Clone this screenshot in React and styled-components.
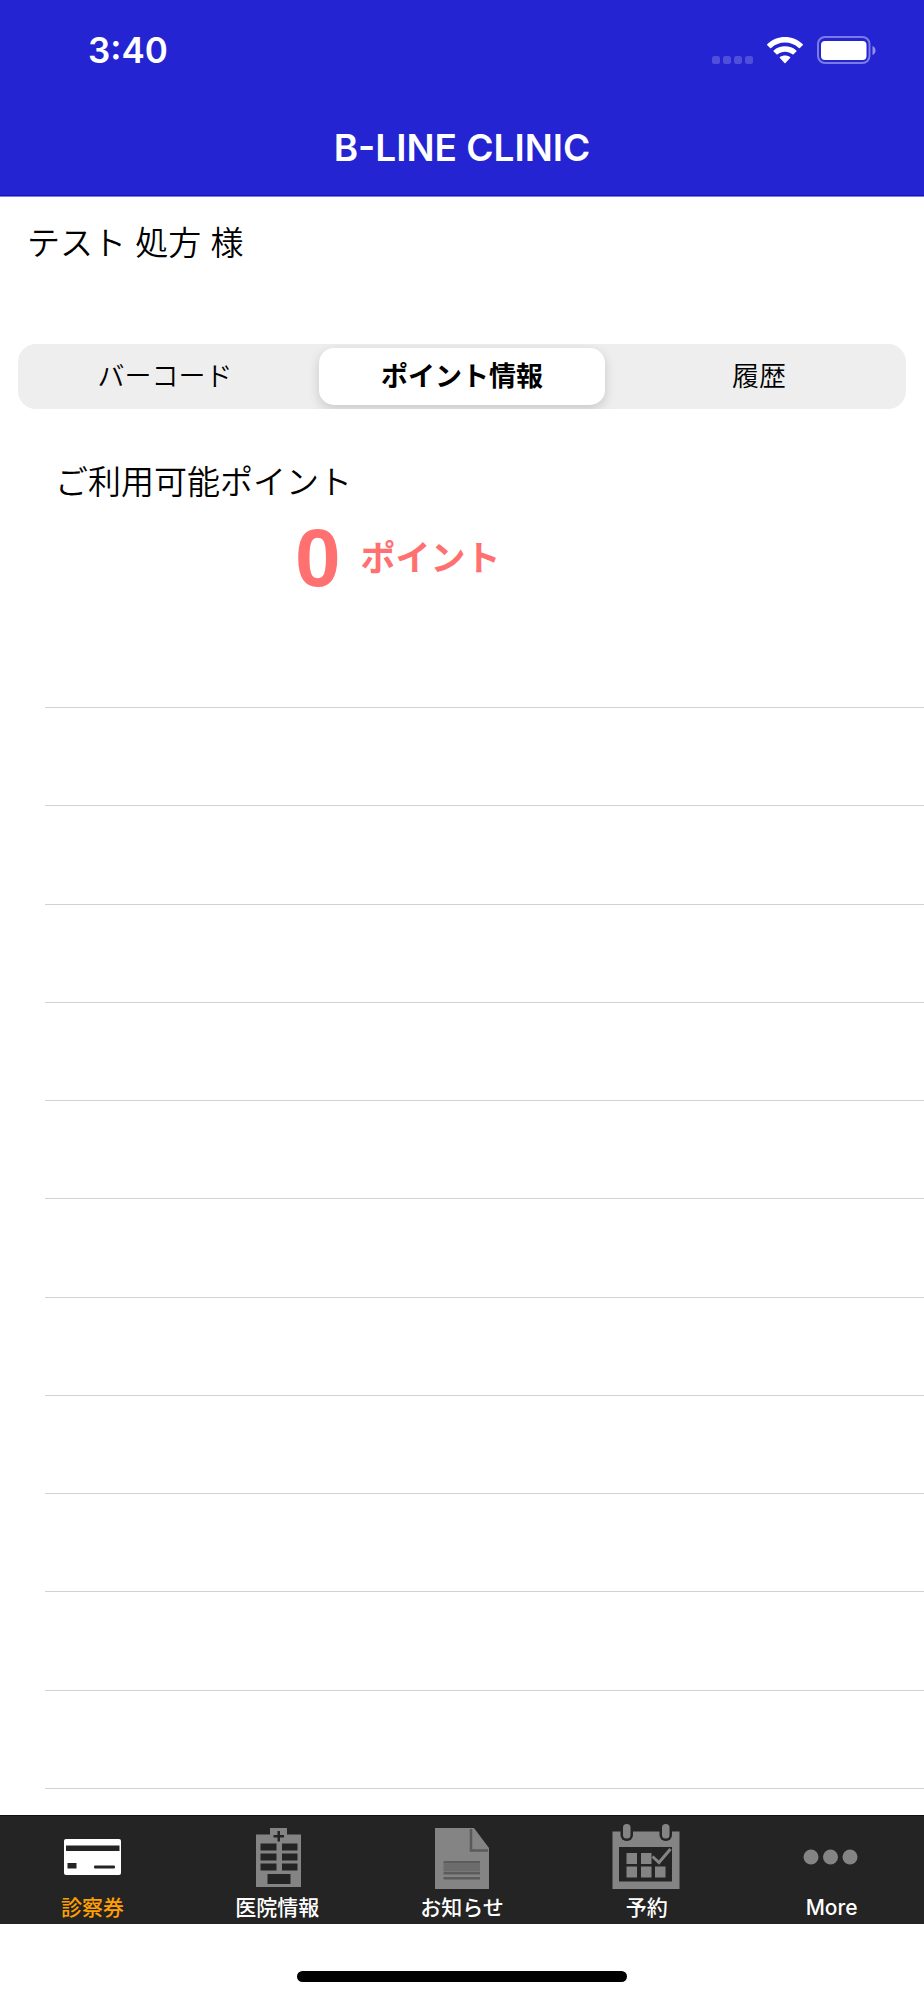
import React, { useState } from 'react'
import styled, { createGlobalStyle } from 'styled-components'

const SEGMENTS = ['バーコード', 'ポイント情報', '履歴']

const ROW_COUNT = 11

const SignalIcon = () => (
  <svg width="41" height="28" viewBox="0 0 41 28" fill="#fff" fillOpacity="0.2">
    <rect x="0" y="20" width="8" height="8" rx="2.5" />
    <rect x="11" y="20" width="8" height="8" rx="2.5" />
    <rect x="22" y="20" width="8" height="8" rx="2.5" />
    <rect x="33" y="20" width="8" height="8" rx="2.5" />
  </svg>
)

const WifiIcon = () => (
  <svg width="36" height="28" viewBox="0 0 36 28" fill="#fff">
    <path d="M0.3 9.2Q-0.2 8.6 0.4 8C5.200 3.500 11.400 1 18 1S30.800 3.500 35.600 8Q36.200 8.600 35.700 9.200L32.900 11.900Q32.400 12.400 31.800 11.900C28 8.500 23.200 6.600 18 6.600S8 8.500 4.200 11.900Q3.600 12.400 3.100 11.900Z" />
    <path d="M6.600 15.500Q6.100 15 6.700 14.400C9.800 11.700 13.800 10.300 18 10.300S26.200 11.700 29.300 14.400Q29.900 15 29.400 15.500L26.500 18.300Q26 18.800 25.400 18.300C23.300 16.600 20.800 15.700 18 15.700S12.700 16.600 10.600 18.300Q10 18.800 9.500 18.300Z" />
    <path d="M12.900 22.100Q12.300 21.500 13 21C14.400 20 16.100 19.500 18 19.500S21.600 20 23 21Q23.700 21.500 23.100 22.100L18.500 26.900Q18 27.400 17.500 26.900Z" />
  </svg>
)

const BatteryIcon = () => (
  <svg width="60" height="28" viewBox="0 0 60 28">
    <rect x="1" y="1" width="51.500" height="26" rx="7" fill="none" stroke="#fff" strokeOpacity="0.400" strokeWidth="2" />
    <rect x="4" y="5" width="45.500" height="19" rx="4" fill="#fff" />
    <path d="M55.500 10c4 1.500 4 7.500 0 9z" fill="#fff" fillOpacity="0.500" />
  </svg>
)

const CardIcon = () => (
  <svg width="70" height="70" viewBox="0 0 70 70">
    <rect x="7" y="17" width="57" height="36" rx="2" fill="#fff" />
    <path d="M9 23.500h53.500v5.500H9z" fill="#242424" />
    <rect x="10.500" y="41" width="9" height="5.500" fill="#242424" />
    <rect x="37" y="43.500" width="21" height="3" rx="1" fill="#242424" />
  </svg>
)

const HospitalIcon = () => (
  <svg width="70" height="70" viewBox="0 0 70 70">
    <path d="M14 12.500h14V6h17v6.500h14V65H14z" fill="#848484" />
    <g fill="#242424">
      <path d="M35.500 9h2.500v4h4v2.500h-4v4h-2.500v-4h-4V13h4z" />
      <path d="M18.500 21.500h16v7h-16zM40 21.500h15.500v7H40z" />
      <path d="M18.500 31.500h16v7h-16zM40 31.500h15.500v7H40z" />
      <path d="M18.500 41.500h16v7h-16zM40 41.500h15.500v7H40z" />
      <path d="M25.500 52h23v10h-23z" />
    </g>
  </svg>
)

const DocumentIcon = () => (
  <svg width="70" height="70" viewBox="0 0 70 70">
    <path d="M8 6h39l15 20v41H8z" fill="#848484" />
    <path d="M44 7v21.500h17" fill="none" stroke="#5a5a5a" strokeWidth="2.500" />
    <path d="M16.500 39h36.500v2.500H16.500zM16.500 50h36.500v2.500H16.500zM16.500 55h36.500v2.500H16.500z" fill="#5c5c5c" />
    <path d="M16.500 41.500h36.500v8H16.500z" fill="#6c6c6c" />
  </svg>
)

const CalendarIcon = () => (
  <svg width="70" height="70" viewBox="0 0 70 70">
    <path d="M0.500 9.500h67V67H0.500z" fill="#848484" />
    <path d="M7 25h53v34.500H7z" fill="#242424" />
    <rect x="8.500" y="-4" width="12.500" height="23" rx="6" fill="#242424" />
    <rect x="47.500" y="-4" width="12.500" height="23" rx="6" fill="#242424" />
    <rect x="11" y="2" width="7.500" height="14.500" rx="3.500" fill="#848484" />
    <rect x="50" y="2" width="7.500" height="14.500" rx="3.500" fill="#848484" />
    <g fill="#848484">
      <path d="M14.500 31h10.500v11H14.500zM29 31h10.500v11H29z" />
      <path d="M14.500 44.500h10.500v11H14.500zM29 44.500h10.500v11H29zM43 44.500h10.500v11H43z" />
    </g>
    <path d="M40.500 34.500l6.500 6L58.500 27" fill="none" stroke="#848484" strokeWidth="3" />
  </svg>
)

const MoreIcon = () => (
  <svg width="70" height="70" viewBox="0 0 70 70" fill="#848484">
    <circle cx="14" cy="35" r="7.500" />
    <circle cx="33.500" cy="35" r="7.500" />
    <circle cx="53" cy="35" r="7.500" />
  </svg>
)

const TABS = [
  { label: '診察券', Icon: CardIcon },
  { label: '医院情報', Icon: HospitalIcon },
  { label: 'お知らせ', Icon: DocumentIcon },
  { label: '予約', Icon: CalendarIcon },
  { label: 'More', Icon: MoreIcon },
]

const App = () => {
  const [segment, setSegment] = useState(1)
  const [tab, setTab] = useState(0)

  const onTabClick = (e, index) => {
    e.preventDefault()
    setTab(index)
  }

  return (
    <Page>
      <GlobalStyle />
      <Header>
        <StatusBar>
          <Time>3:40</Time>
          <StatusIcons>
            <SignalIcon />
            <WifiIcon />
            <BatteryIcon />
          </StatusIcons>
        </StatusBar>
        <Title>B-LINE CLINIC</Title>
      </Header>

      <Main>
        <PatientName>テスト 処方 様</PatientName>

        <SegmentedControl>
          {SEGMENTS.map((label, index) => (
            <Segment
              key={label}
              type="button"
              aria-pressed={segment === index}
              $active={segment === index}
              onClick={() => setSegment(index)}
            >
              {label}
            </Segment>
          ))}
        </SegmentedControl>

        <PointSection>
          <PointHeading>ご利用可能ポイント</PointHeading>
          <PointValue>
            <PointNumber>0</PointNumber>
            <PointUnit>ポイント</PointUnit>
          </PointValue>
        </PointSection>

        <HistoryList>
          {Array.from({ length: ROW_COUNT }, (_, index) => (
            <HistoryRow key={index} />
          ))}
        </HistoryList>
      </Main>

      <TabBar>
        {TABS.map(({ label, Icon }, index) => (
          <TabLink
            key={label}
            href="#"
            $active={tab === index}
            onClick={(e) => onTabClick(e, index)}
          >
            <Icon />
            <span>{label}</span>
          </TabLink>
        ))}
      </TabBar>
      <HomeArea>
        <HomeIndicator />
      </HomeArea>
    </Page>
  )
}

export default App

const GlobalStyle = createGlobalStyle`
  * {
    box-sizing: border-box;
  }

  body {
    margin: 0;
    background: #fff;
    color: #000;
    font-family: Inter, 'Noto Sans CJK JP', sans-serif;
  }

  svg {
    display: block;
    flex-shrink: 0;
  }
`

const Page = styled.div`
  display: flex;
  flex-direction: column;
  min-height: 100vh;
`

const Header = styled.header`
  background: #2424d2;
  border-bottom: 1px solid #1414b8;
  box-shadow: 0 1px 0 #8080e8;
  color: #fff;
`

const StatusBar = styled.div`
  display: flex;
  align-items: center;
  justify-content: space-between;
  height: 100px;
  padding: 0 47px 0 88px;
`

const Time = styled.span`
  font-size: 35px;
  font-weight: 600;
  line-height: 40px;
`

const StatusIcons = styled.div`
  display: flex;
  align-items: center;
  gap: 14px;
`

const Title = styled.h1`
  margin: 0;
  padding: 24px 0 23px;
  font-size: 37px;
  font-weight: 600;
  line-height: 48px;
  text-align: center;
`

const Main = styled.main`
  display: flex;
  flex: 1;
  flex-direction: column;
`

const PatientName = styled.p`
  margin: 0;
  padding: 23px 27px 0;
  font-size: 33px;
  font-weight: 350;
  line-height: 48px;
`

const SegmentedControl = styled.div`
  display: grid;
  grid-template-columns: repeat(3, 1fr);
  gap: 11px;
  height: 65px;
  margin: 77px 18px 0;
  padding: 4px;
  overflow: hidden;
  border-radius: 18px;
  background: #eee;
`

const Segment = styled.button`
  padding: 0;
  border: 0;
  border-radius: 15px;
  background: ${(props) => (props.$active ? '#fff' : 'transparent')};
  box-shadow: ${(props) => (props.$active ? '0 4px 12px rgba(0, 0, 0, 0.16)' : 'none')};
  color: #000;
  font-family: inherit;
  font-size: 27px;
  font-weight: ${(props) => (props.$active ? 700 : 350)};
  line-height: 40px;
`

const PointSection = styled.section`
  padding: 49px 55px 0;
`

const PointHeading = styled.h2`
  margin: 0;
  font-size: 33px;
  font-weight: 350;
  line-height: 48px;
`

const PointValue = styled.p`
  display: flex;
  align-items: center;
  gap: 20px;
  margin: 0;
  padding-left: 240px;
  color: #ff7070;
  font-weight: 700;
  line-height: 104px;
`

const PointNumber = styled.span`
  font-family: 'Liberation Sans', Arial, sans-serif;
  font-size: 82px;
`

const PointUnit = styled.span`
  font-size: 35px;
`

const HistoryList = styled.ul`
  display: flex;
  flex: 1;
  flex-direction: column;
  margin: 97px 0 26px;
  padding: 0 0 0 45px;
  list-style: none;
`

const HistoryRow = styled.li`
  flex: 1;
  min-height: 64px;
  border-bottom: 1px solid #d2d2d2;

  &:first-child {
    border-top: 1px solid #d2d2d2;
  }
`

const TabBar = styled.nav`
  display: grid;
  grid-template-columns: repeat(5, 1fr);
  height: 109px;
  padding-top: 6px;
  border-top: 1px solid #111;
  background: #242424;
`

const TabLink = styled.a`
  display: flex;
  flex-direction: column;
  align-items: center;
  color: ${(props) => (props.$active ? '#ffa000' : '#fff')};
  font-size: 21px;
  font-weight: 500;
  line-height: 32px;
  text-decoration: none;
`

const HomeArea = styled.div`
  display: flex;
  justify-content: center;
  height: 76px;
  padding-top: 47px;
`

const HomeIndicator = styled.div`
  width: 330px;
  height: 11px;
  border-radius: 6px;
  background: #000;
`
